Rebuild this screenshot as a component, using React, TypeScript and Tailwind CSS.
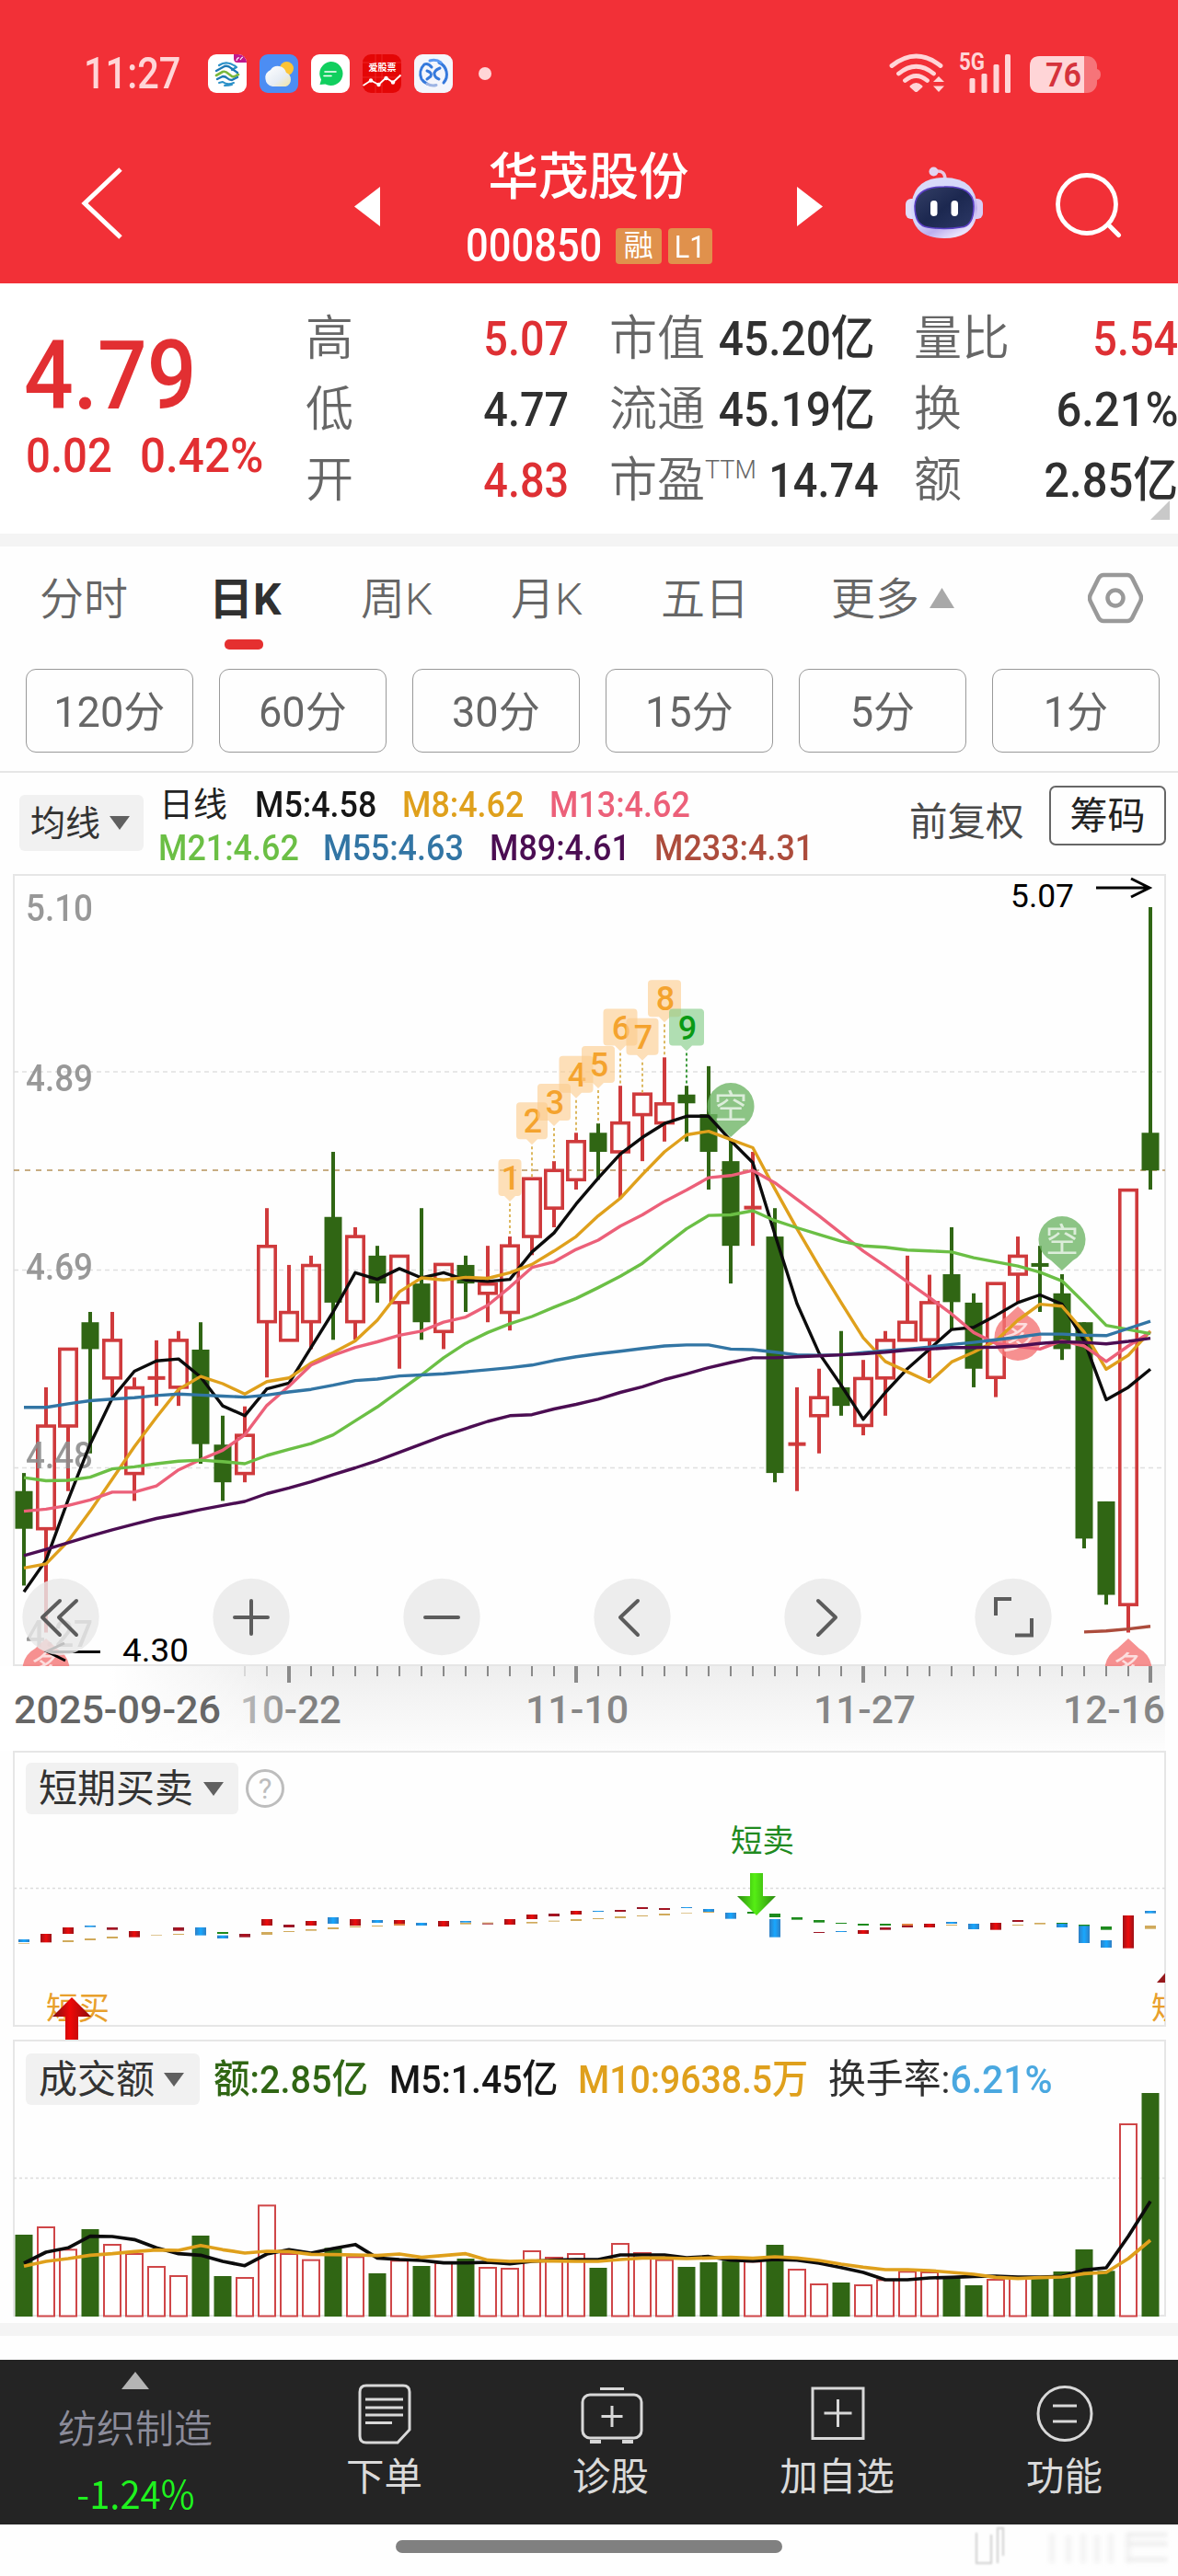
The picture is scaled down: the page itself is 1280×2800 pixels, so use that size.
import React from 'react';

const FONT = "font-[Roboto,'Noto_Sans_CJK_SC',sans-serif]";

type Kind = 'r' | 'g';
type Candle = [Kind, number, number, number, number];

// kind, high, body top, body bottom, low (chart units)
const candles: Candle[] = [
  ['g', 1178, 1213, 1286, 1396], ['r', 1012, 1086, 1287, 1487], ['r', 937, 937, 1088, 1213], ['g', 866, 886, 938, 1140],
  ['r', 866, 920, 995, 1030], ['r', 993, 1012, 1180, 1232], ['r', 921, 994, 994, 1048], ['r', 903, 920, 1013, 1048],
  ['g', 886, 939, 1122, 1160], ['g', 1067, 1123, 1196, 1232], ['r', 1049, 1104, 1180, 1196], ['r', 665, 738, 886, 993],
  ['r', 775, 866, 922, 922], ['r', 757, 775, 886, 938], ['g', 556, 682, 848, 920], ['r', 702, 719, 886, 920],
  ['g', 738, 757, 811, 848], ['r', 757, 757, 849, 976], ['g', 665, 811, 886, 920], ['r', 773, 773, 905, 938],
  ['g', 757, 775, 811, 866], ['r', 738, 811, 831, 886], ['r', 720, 737, 868, 902], ['r', 607, 607, 721, 756],
  ['r', 574, 591, 666, 702], ['r', 519, 535, 611, 629], ['g', 501, 519, 556, 610], ['r', 428, 499, 557, 647],
  ['r', 443, 443, 485, 574], ['r', 373, 462, 501, 536], ['g', 428, 445, 462, 536], ['g', 390, 483, 556, 629],
  ['g', 530, 574, 738, 811], ['r', 556, 664, 664, 738], ['g', 665, 720, 1178, 1196], ['r', 1012, 1122, 1122, 1213],
  ['r', 976, 1031, 1068, 1140], ['g', 903, 1012, 1048, 1067], ['r', 959, 994, 1087, 1105], ['r', 903, 920, 995, 1067],
  ['r', 757, 885, 922, 922], ['r', 794, 847, 921, 994], ['g', 702, 793, 847, 900], ['g', 830, 848, 976, 1012],
  ['r', 810, 810, 994, 1031], ['r', 720, 757, 794, 848], ['g', 738, 775, 775, 866], ['g', 793, 830, 938, 959],
  ['g', 886, 886, 1305, 1324], ['g', 1233, 1233, 1414, 1433], ['r', 629, 629, 1434, 1487], ['g', 82, 519, 592, 629],
];

const ma21 = [1187,1193,1192,1186,1170,1166,1160,1155,1153,1156,1160,1144,1132,1121,1104,1077,1050,1019,988,955,927,906,889,875,857,840,819,797,772,738,705,679,678,670,689,703,716,729,738,741,746,748,750,761,769,777,789,806,848,892,900,908];
const ma55 = [1051,1051,1044,1038,1035,1032,1028,1025,1027,1029,1031,1027,1021,1016,1008,999,996,990,988,986,982,978,974,969,960,953,947,942,937,932,930,930,938,939,944,949,950,949,945,941,938,934,929,925,920,915,909,909,911,912,898,884];
const ma89 = [1338,1326,1313,1300,1288,1277,1266,1258,1249,1241,1233,1218,1207,1195,1181,1168,1154,1138,1122,1106,1092,1078,1067,1065,1054,1045,1035,1022,1011,997,986,974,964,955,955,953,951,949,947,944,940,938,935,935,934,932,927,924,925,928,923,917];
const ma13 = [1252,1248,1241,1230,1215,1215,1203,1172,1152,1134,1104,1047,1010,969,950,935,924,911,903,886,876,853,818,780,769,745,727,700,678,652,630,606,602,592,616,648,680,714,748,777,808,838,870,906,927,933,938,922,932,962,932,905];
const ma8 = [1362,1354,1310,1252,1190,1127,1070,1016,991,1005,1025,1001,994,965,945,922,882,827,800,804,799,801,790,774,748,720,680,646,600,556,523,516,532,548,628,705,778,848,916,962,982,1002,963,944,922,882,851,855,905,977,950,903];
const ma5 = [1408,1347,1230,1122,1033,981,961,957,992,1048,1067,1015,1004,935,866,790,803,782,800,790,804,807,803,750,713,657,607,560,528,501,487,487,534,577,716,850,946,1008,1074,1022,976,938,900,896,873,848,833,851,922,1036,1012,977];

const volumes: [Kind, number][] = [
  ['g',657],['r',633],['r',706],['g',639],['r',690],['r',720],['r',762],['r',792],['g',660],['g',792],['r',798],['r',562],['r',720],['r',740],['g',700],['r',730],['g',783],['r',742],['g',759],['r',750],['g',735],['r',765],['r',768],['r',711],['r',732],['r',720],['g',765],['r',687],['r',717],['r',740],['g',762],['g',747],['g',742],['r',745],['g',690],['r',771],['r',819],['g',813],['r',822],['r',805],['r',778],['r',780],['g',792],['g',822],['r',804],['r',800],['g',792],['g',777],['g',705],['g',775],['r',297],['g',195],
];
const vol5 = [750,714,700,662,663,673,700,719,724,744,758,720,706,717,702,689,733,738,741,749,749,747,752,744,740,738,738,723,723,723,732,728,740,743,738,740,750,764,780,804,804,798,796,793,792,795,795,793,772,765,662,548];
const vol10 = [760,744,735,724,719,712,707,708,692,706,717,711,712,721,722,723,725,720,731,725,719,740,744,742,743,744,744,738,733,733,735,733,731,734,729,733,741,753,763,771,771,774,780,786,796,800,797,795,784,780,735,675];

// index, colour, top, bottom
const signals: [number, string, number, number][] = [
  [0,'b',924,933],[0,'t',936,938],[1,'R',906,934],[2,'R',885,906],[2,'t',927,933],[3,'b',879,884],[3,'t',921,927],[4,'D',885,893],[4,'t',915,921],[5,'R',897,917],[6,'t',909,911],[7,'D',885,896],[7,'t',906,909],[8,'b',885,911],[9,'G',900,906],[9,'b',911,921],[10,'D',906,917],[11,'R',858,879],[11,'t',900,909],[12,'D',876,885],[12,'t',897,900],[13,'R',864,879],[13,'t',891,896],[14,'b',852,873],[14,'t',885,891],[15,'R',858,879],[15,'t',881,885],[16,'b',861,870],[16,'t',879,882],[17,'R',861,873],[17,'o',873,879],[18,'b',870,879],[19,'R',864,882],[20,'b',864,869],[20,'t',870,875],[21,'t',869,872],[21,'D',872,875],[22,'R',858,876],[23,'R',843,858],[23,'t',867,872],[24,'D',840,849],[24,'t',863,866],[25,'R',831,843],[25,'t',858,864],[26,'b',831,834],[26,'t',855,858],[27,'D',828,834],[27,'t',849,855],[28,'D',819,825],[28,'t',846,849],[29,'D',822,828],[29,'t',840,846],[30,'b',819,822],[30,'t',837,839],[31,'b',825,834],[31,'t',834,837],[32,'b',837,857],[33,'G',834,840],[34,'G',840,852],[34,'b',858,917],[35,'G',852,860],[36,'G',861,869],[36,'D',900,903],[37,'G',870,873],[37,'b',897,900],[38,'G',873,879],[38,'R',894,906],[39,'G',873,879],[39,'D',885,893],[40,'o',873,879],[40,'D',879,885],[41,'R',873,885],[42,'b',867,873],[42,'t',876,879],[43,'b',873,891],[44,'R',870,893],[45,'D',861,867],[45,'t',876,879],[46,'t',870,875],[47,'b',871,885],[47,'G',870,873],[48,'b',878,936],[48,'G',876,880],[49,'G',882,893],[49,'b',927,951],[50,'R',846,953],[51,'b',831,839],[51,'t',879,890],
];
const signalFill: Record<string, string> = { b: 'url(#sb)', t: '#d0aa5c', R: 'url(#sr)', D: 'url(#sd)', G: '#1d8a1d', o: '#e08040' };

const X = (i: number) => 26 + 24 * i;
const Y = (v: number) => 940 + v * 0.5612;
const V = (v: number) => 2210 + v / 3;
const path = (vals: number[], f: (v: number) => number, start = 0) =>
  vals.map((v, i) => `${X(i + start)},${f(v).toFixed(1)}`).join(' ');

const RED = '#cf3a3c';
const GREEN = '#306614';

function CandleShape({ c, i }: { c: Candle; i: number }) {
  const [k, h, t, b, l] = c;
  const x = X(i);
  const yt = Y(t);
  const yb = Y(b);
  const col = k === 'r' ? RED : GREEN;
  if (t === b) {
    return (
      <g fill={col}>
        <rect x={x - 2} y={Y(h)} width={4} height={Y(l) - Y(h)} />
        <rect x={x - 9.5} y={yt - 2} width={19} height={4} />
      </g>
    );
  }
  if (k === 'g') {
    return (
      <g fill={col}>
        <rect x={x - 2} y={Y(h)} width={4} height={Y(l) - Y(h)} />
        <rect x={x - 9.5} y={yt} width={19} height={yb - yt} />
      </g>
    );
  }
  return (
    <g>
      {t > h && <rect x={x - 2} y={Y(h)} width={4} height={yt - Y(h)} fill={col} />}
      {l > b && <rect x={x - 2} y={yb} width={4} height={Y(l) - yb} fill={col} />}
      <rect x={x - 9.2} y={yt + 0.6} width={18.4} height={yb - yt - 1.2} fill="none" stroke={col} strokeWidth={3.6} />
    </g>
  );
}

function CountFlag({ n, i, top, w = 36 }: { n: number; i: number; top: number; w?: number }) {
  const x = X(i);
  const y = Y(top);
  const green = n === 9;
  return (
    <g>
      <line x1={x} x2={x} y1={y + 48} y2={Y(candles[i][1])} stroke={green ? '#3c9a3c' : '#dcb860'} strokeWidth={2} strokeDasharray="3 3" />
      <path
        d={`M${x - w / 2 + 4} ${y}h${w - 8}q4 0 4 4v32q0 4 -4 4h-${w / 2 - 10}l-6 6l-6 -6h-${w / 2 - 10}q-4 0 -4 -4v-32q0 -4 4 -4z`}
        fill={green ? '#7fca83' : '#fccb8c'}
        opacity={0.62}
      />
      <text x={x + 1} y={y + 33} textAnchor="middle" fontSize={36} fontWeight={500} fill={green ? '#0a9a14' : '#f4a32e'}>{n}</text>
    </g>
  );
}

function Bubble({ x, cy, kind }: { x: number; cy: number; kind: 'short' | 'long' }) {
  const short = kind === 'short';
  const d = short
    ? `M${x - 12} ${cy + 22}A25.500 25.500 0 1 1 ${x + 12} ${cy + 22}L${x} ${cy + 33}z`
    : `M${x - 12} ${cy - 22}A25.500 25.500 0 1 0 ${x + 12} ${cy - 22}L${x} ${cy - 33}z`;
  return (
    <g>
      <path d={d} fill={short ? '#6fb567' : '#f47474'} opacity={0.8} />
      <text x={x} y={cy + 13} textAnchor="middle" fontSize={36} fill="#fff" opacity={0.7}>{short ? '空' : '多'}</text>
    </g>
  );
}

function KChart() {
  const cx = [66, 273, 480, 687, 894, 1101];
  return (
    <svg className="block" width={1280} height={968} viewBox="0 942 1280 968">
      <defs>
        <linearGradient id="axis" x1="0" y1="0" x2="0" y2="1">
          <stop offset="0" stopColor="#eeeeee" />
          <stop offset="1" stopColor="#fdfdfd" />
        </linearGradient>
        <linearGradient id="fade" x1="0" y1="0" x2="1" y2="0">
          <stop offset="0" stopColor="#fff" />
          <stop offset="0.4" stopColor="#fff" />
          <stop offset="1" stopColor="#fff" stopOpacity="0" />
        </linearGradient>
        <linearGradient id="dateFade" gradientUnits="userSpaceOnUse" x1="262" y1="0" x2="330" y2="0">
          <stop offset="0" stopColor="#bdbdbd" />
          <stop offset="1" stopColor="#808080" />
        </linearGradient>
        <clipPath id="plot"><rect x="0" y="950" width="1267" height="861" /></clipPath>
      </defs>
      <rect x="15" y="951" width="1251" height="859" fill="none" stroke="#e6e6e6" strokeWidth="2" />
      {[1165, 1380.5, 1595.5].map((y) => (
        <line key={y} x1="15" x2="1266" y1={y} y2={y} stroke="#e0e0e0" strokeWidth="1.3" strokeDasharray="5 4" />
      ))}
      <line x1="15" x2="1266" y1="1272" y2="1272" stroke="#b5935a" strokeWidth="1.6" strokeDasharray="6 6" />
      <g clipPath="url(#plot)">
        <g>{candles.map((c, i) => <CandleShape key={i} c={c} i={i} />)}</g>
        <g fontSize={40} fontWeight={500} fill="#8e8e8e" opacity={0.9}>
          <text x="28" y="1001" textLength="73" lengthAdjust="spacingAndGlyphs">5.10</text>
          <text x="28" y="1186" textLength="73" lengthAdjust="spacingAndGlyphs">4.89</text>
          <text x="28" y="1391" textLength="73" lengthAdjust="spacingAndGlyphs">4.69</text>
          <text x="28" y="1596" textLength="73" lengthAdjust="spacingAndGlyphs">4.48</text>
          <text x="28" y="1790" textLength="73" lengthAdjust="spacingAndGlyphs">4.27</text>
        </g>
        <Bubble x={1106} cy={1453} kind="long" />
        <Bubble x={794} cy={1203} kind="short" />
        <Bubble x={1154} cy={1348} kind="short" />
        <Bubble x={50} cy={1814} kind="long" />
        <Bubble x={1226} cy={1814} kind="long" />
        <g fill="none" strokeWidth="3.400" strokeLinejoin="round">
          <polyline points={path(ma5, Y)} stroke="#0c0c0c" />
          <polyline points={path(ma8, Y)} stroke="#dfa01c" />
          <polyline points={path(ma13, Y)} stroke="#ec6079" />
          <polyline points={path(ma21, Y)} stroke="#6bbf45" />
          <polyline points={path(ma55, Y)} stroke="#3275a4" />
          <polyline points={path(ma89, Y)} stroke="#4b0d52" />
          <polyline points={path([1486, 1484, 1480, 1475], Y, 48)} stroke="#ac4c3c" />
        </g>
      </g>
      <CountFlag n={1} i={22} top={570} w={25} />
      <CountFlag n={2} i={23} top={460} w={34} />
      <CountFlag n={3} i={24} top={424} />
      <CountFlag n={4} i={25} top={370} w={37} />
      <CountFlag n={5} i={26} top={351} />
      <CountFlag n={6} i={27} top={279} w={37} />
      <CountFlag n={7} i={28} top={297} w={35} />
      <CountFlag n={8} i={29} top={223} />
      <CountFlag n={9} i={30} top={279} w={38} />
      <g fontSize={35} fill="#000">
        <text x="1098" y="986" textLength="69" lengthAdjust="spacingAndGlyphs">5.07</text>
        <text x="133" y="1806" textLength="72" lengthAdjust="spacingAndGlyphs">4.30</text>
      </g>
      <g fill="none" stroke="#000" strokeWidth="3">
        <path d="M1191 965H1249M1229 955L1249 965L1229 975" />
        <path d="M109 1795.500H51M70 1786L51 1795L71 1805" />
      </g>
      {cx.map((x) => <circle key={x} cx={x} cy={1757.5} r={41.7} fill="#e9e9e9" opacity={0.82} />)}
      <g fill="none" stroke="#5c5c5c" strokeWidth="4" strokeLinecap="round" strokeLinejoin="round">
        <path d="M65 1740L46 1758L65 1777M83 1740L64 1758L83 1777" />
        <path d="M255 1758H291M273 1740V1776" />
        <path d="M462 1758H498" />
        <path d="M693 1740L674 1758L693 1777" />
        <path d="M889 1740L908 1758L889 1777" />
        <path strokeLinecap="butt" strokeLinejoin="miter" d="M1099 1738H1082V1756M1103 1777.500H1121V1759" />
      </g>
      <rect x="15" y="1811" width="1251" height="92" fill="url(#axis)" />
      <rect x="0" y="1811" width="300" height="92" fill="url(#fade)" />
      <g>
        {candles.map((_, i) => {
          if (i < 10) return null;
          const major = [12, 25, 38, 51].includes(i);
          return (
            <rect key={i} x={X(i) - (major ? 2 : 1)} y={1811} width={major ? 4 : 2} height={major ? 18 : 11}
              fill={i === 10 ? '#d8d8d8' : i === 11 ? '#b0b0b0' : '#8a8a8a'} />
          );
        })}
      </g>
      <g fontSize={42} fontWeight={500} fill="#868686">
        <text x="15" y="1873" fill="#666" textLength="225" lengthAdjust="spacingAndGlyphs">2025-09-26</text>
        <text x="261" y="1873" fill="url(#dateFade)" textLength="110" lengthAdjust="spacingAndGlyphs">10-22</text>
        <text x="571" y="1873" textLength="112" lengthAdjust="spacingAndGlyphs">11-10</text>
        <text x="884" y="1873" textLength="111" lengthAdjust="spacingAndGlyphs">11-27</text>
        <text x="1155" y="1873" textLength="111" lengthAdjust="spacingAndGlyphs">12-16</text>
      </g>
    </svg>
  );
}

function SignalChart() {
  return (
    <svg className="block" width={1280} height={314} viewBox="0 1903 1280 314">
      <defs>
        <clipPath id="sig"><rect x="15" y="1903" width="1251" height="314" /></clipPath>
        <linearGradient id="up" x1="0" y1="0" x2="1" y2="0">
          <stop offset="0" stopColor="#7c1010" /><stop offset="0.45" stopColor="#f00808" /><stop offset="1" stopColor="#8c0c0c" />
        </linearGradient>
        <linearGradient id="down" x1="0" y1="0" x2="1" y2="0">
          <stop offset="0" stopColor="#2c8a10" /><stop offset="0.45" stopColor="#55ee14" /><stop offset="1" stopColor="#2c8a10" />
        </linearGradient>
        <linearGradient id="sb" x1="0" y1="0" x2="1" y2="0">
          <stop offset="0" stopColor="#2f7fc4" /><stop offset="0.5" stopColor="#18a8ff" /><stop offset="1" stopColor="#2f7fc4" />
        </linearGradient>
        <linearGradient id="sr" x1="0" y1="0" x2="1" y2="0">
          <stop offset="0" stopColor="#9c1218" /><stop offset="0.5" stopColor="#ee0c0c" /><stop offset="1" stopColor="#9c1218" />
        </linearGradient>
        <linearGradient id="sd" x1="0" y1="0" x2="1" y2="0">
          <stop offset="0" stopColor="#8a2030" /><stop offset="0.5" stopColor="#b00e1c" /><stop offset="1" stopColor="#8a2030" />
        </linearGradient>
      </defs>
      <rect x="15" y="1904" width="1251" height="298" fill="none" stroke="#e6e6e6" strokeWidth="2" />
      <line x1="15" x2="1266" y1="2052.500" y2="2052.500" stroke="#dcdcdc" strokeWidth="1.5" strokeDasharray="3 3" />
      {signals.map(([i, c, t, b], n) => (
        <rect key={n} x={X(i) - 6} y={1800 + t / 3} width={12} height={(b - t) / 3} fill={signalFill[c]} />
      ))}
      <text x="794" y="2013" fontSize="34.500" fill="#1f8a1f">短卖</text>
      <text x="50" y="2195" fontSize="34.500" fill="#e8a02c">短买</text>
      <path d="M815 2036H829V2061H843L822 2082L801 2061H815z" fill="url(#down)" />
      <path d="M78 2171L99 2192H85V2217H71V2192H57z" fill="url(#up)" />
      <g clipPath="url(#sig)">
        <text x="1251" y="2195" fontSize="34.500" fill="#e8a02c">短</text>
        <path d="M1257 2155L1272 2138V2155z" fill="#96181c" />
      </g>
    </svg>
  );
}

function VolumeChart() {
  return (
    <svg className="block" width={1280} height={308} viewBox="0 2217 1280 308">
      <rect x="15" y="2218" width="1251" height="299" fill="none" stroke="#e6e6e6" strokeWidth="2" />
      <line x1="15" x2="1266" y1="2367.500" y2="2367.500" stroke="#dcdcdc" strokeWidth="1.5" strokeDasharray="3 3" />
      {volumes.map(([k, t], i) =>
        k === 'g' ? (
          <rect key={i} x={X(i) - 9.5} y={V(t)} width={19} height={2518 - V(t)} fill={GREEN} />
        ) : (
          <rect key={i} x={X(i) - 9} y={V(t)} width={18} height={2517.5 - V(t)} fill="#fff" stroke="#cf4648" strokeWidth={2} />
        ),
      )}
      <g fill="none" strokeWidth="3.700" strokeLinejoin="round">
        <polyline points={path(vol5, V)} stroke="#0c0c0c" />
        <polyline points={path(vol10, V)} stroke="#dfa01c" />
      </g>
    </svg>
  );
}

function AppIcons() {
  return (
    <svg className="ml-[225px] block shrink-0" width="320" height="44" viewBox="224 58 320 44">
      <defs>
        <linearGradient id="cloud" x1="0" y1="0" x2="1" y2="1">
          <stop offset="0" stopColor="#ffffff" /><stop offset="0.6" stopColor="#e6ecf4" /><stop offset="1" stopColor="#f4e4a0" />
        </linearGradient>
        <clipPath id="badge"><rect x="225" y="59" width="42" height="42" rx="9" /></clipPath>
      </defs>
      <g clipPath="url(#badge)">
        <rect x="225" y="59" width="42" height="42" fill="#fff" />
        <path d="M253 59h14v9h-10q-4 0-4-4z" fill="#c2188c" />
        <path d="M256 66q1-4 3-3M260 65q2-3 3-3" fill="none" stroke="#fff" strokeWidth="1.200" />
        <g fill="none" strokeLinecap="round" strokeLinejoin="round">
          <path d="M237 71q9-6 19 2l-5 3" stroke="#2a90c8" strokeWidth="2.200" />
          <path d="M234 77l9-5q4-1 7 2l7 5" stroke="#1d78b4" strokeWidth="2.400" />
          <path d="M234 82l7-4q3-1 6 2l4 3q2 1 5-1l2-1" stroke="#79b83c" strokeWidth="2.600" />
          <path d="M235 86l6-3q3 0 5 2t5 2l6-3" stroke="#1d78b4" strokeWidth="2.400" />
          <path d="M237 90l4-1q5 4 12 1M243 93q5 0 8-1" stroke="#2a90c8" strokeWidth="2" />
        </g>
      </g>
      <g>
        <rect x="281" y="59" width="42" height="42" rx="9" fill="#4c8df3" />
        <circle cx="310.500" cy="74.500" r="7.500" fill="#fdc435" />
        <path d="M295 94a9.500 9.500 0 0 1-2-18a9.500 9.500 0 0 1 17 3a8 8 0 0 1-.5 15z" fill="url(#cloud)" />
      </g>
      <g>
        <rect x="337" y="59" width="42" height="42" rx="9" fill="#fff" />
        <path d="M358 67a13 13 0 1 1-5.500 24.500l-6 .5l1.500-5.500a13 13 0 0 1 10-19.500z" fill="#10cf5e" />
        <path d="M352 78h12M351 82.500h8" stroke="#fff" strokeWidth="1.600" strokeLinecap="round" />
      </g>
      <g>
        <rect x="393" y="59" width="42" height="42" rx="9" fill="#e40606" />
        <path d="M393 84h42M407 59v42M414 59v42M393 68h42" stroke="#f23a3a" strokeWidth="0.600" />
        <text x="414.500" y="76.500" textAnchor="middle" fontSize="10" fontWeight="700" fill="#fff">爱股票</text>
        <path d="M393.500 93l8.500-5.500 8.500 4.500 8-7.500 7.500 5 8.500-8" fill="none" stroke="#fff" strokeWidth="1.800" />
        <g fill="#fff"><circle cx="402" cy="87.500" r="2.200" /><circle cx="410.500" cy="92" r="2.200" /><circle cx="418.500" cy="85" r="2.200" /><circle cx="426" cy="89.500" r="2.200" /></g>
      </g>
      <g fill="none" strokeWidth="3" strokeLinecap="round">
        <rect x="449" y="59" width="42" height="42" rx="9" fill="#f4f6fc" stroke="none" />
        <path d="M457 86a14.500 14.500 0 0 1 3-16q4-2 8 3M463 91q-4-2-5-4M476 68a14 14 0 0 1 5 22" stroke="#3579dc" />
        <path d="M466 66q7-2 12 2" stroke="#5a9af4" />
        <path d="M463 77q6 2 4 6l-4 3M477 74q-7 3-6 7q1 4 5 5" stroke="#3579dc" />
        <path d="M463 91q5 3 10 1.500" stroke="#9db4e4" />
      </g>
      <circle cx="526" cy="80" r="7" fill="#ffd5d7" />
    </svg>
  );
}

function StatusRight() {
  return (
    <svg className="ml-auto mr-[80px] block" width="236" height="48" viewBox="964 56 236 48">
      <g fill="none" stroke="#ffd5d7" strokeWidth="4.800" strokeLinecap="round">
        <path d="M969 71.500Q995.500 50.500 1022 71.500M976.500 80Q995.500 64.500 1014.500 80M983.500 87.500Q995.500 77.500 1007.500 87.500" />
      </g>
      <path d="M989 93q6.500-6 13 0q1 1 0 2l-5 4.500q-1.500 1-3 0l-5-4.500q-1-1 0-2zM1014 89l6-6 6 6zM1014 93.500l6 6.500 6-6.500z" fill="#ffd5d7" />
      <text x="1042" y="76" fontSize="25" fontWeight="700" fill="#ffd5d7" textLength="28" lengthAdjust="spacingAndGlyphs">5G</text>
      <g fill="#ffd5d7">
        <rect x="1053.500" y="85" width="6" height="16" rx="1.500" /><rect x="1066.500" y="80" width="6" height="21" rx="1.500" />
        <rect x="1079.500" y="70" width="6" height="31" rx="1.500" /><rect x="1092" y="59" width="6" height="42" rx="1.500" />
      </g>
      <rect x="1119" y="61" width="73" height="40" rx="11" fill="#f67479" />
      <path d="M1130 61h48v40h-48q-11 0-11-11v-18q0-11 11-11z" fill="#ffd5d7" />
      <path d="M1192 75q4 1 4 6t-4 6z" fill="#f67479" />
      <text x="1136" y="94" fontSize="36" fontWeight="600" fill="#d5333c" textLength="39" lengthAdjust="spacingAndGlyphs">76</text>
    </svg>
  );
}

function Robot() {
  return (
    <svg className="block" width="88" height="82" viewBox="980 180 88 82">
      <defs>
        <linearGradient id="shell" x1="0" y1="0" x2="0.6" y2="1">
          <stop offset="0" stopColor="#dcdcfa" /><stop offset="0.6" stopColor="#d2d6fa" /><stop offset="0.8" stopColor="#bcaeee" /><stop offset="1" stopColor="#e8e2fc" />
        </linearGradient>
        <linearGradient id="visor" x1="0" y1="0" x2="1" y2="1">
          <stop offset="0" stopColor="#343f66" /><stop offset="0.5" stopColor="#1c2850" /><stop offset="1" stopColor="#2c3866" />
        </linearGradient>
      </defs>
      <path d="M1026 195q0-10-10-9" fill="none" stroke="#e8c8e2" strokeWidth="3.500" />
      <circle cx="1013.500" cy="186.500" r="5" fill="#e2d4f2" />
      <rect x="983" y="216" width="14" height="22" rx="6" fill="#e0dcf8" />
      <rect x="1053" y="216" width="14" height="22" rx="6" fill="#d8ccf4" />
      <path d="M1025 193q35 0 36 34q-1 32-36 32t-36-32q1-34 36-34z" fill="url(#shell)" />
      <path d="M1025 203q32-1 32 21t-14 23q-18 3-36 0q-14-2-14-23q1-21 32-21z" fill="url(#visor)" stroke="#5a3fc4" strokeWidth="1.600" />
      <rect x="1010" y="218" width="7.500" height="17" rx="3.700" fill="#fff" /><rect x="1032.500" y="218" width="7.500" height="17" rx="3.700" fill="#fff" />
    </svg>
  );
}

function Header() {
  return (
    <header className="h-[308px] bg-[#f23037]">
      <div className="flex h-[110px] items-center pt-[50px]">
        <div className="-mr-[225px] w-[225px] shrink-0 pl-[91px] text-[48px] font-medium leading-[60px] text-[#ffd5d7]">
          <span className="inline-block origin-left scale-x-[0.865] whitespace-nowrap">11:27</span>
        </div>
        <AppIcons />
        <StatusRight />
      </div>
      <div className="flex h-[198px]">
        <div className="w-[385px] pl-[88px] pt-[71px]">
          <svg width="48" height="80" viewBox="88 181 48 80"><path d="M131 184L92 221L131 258" fill="none" stroke="#fff" strokeWidth="5" /></svg>
        </div>
        <svg className="mt-[93px] block" width="28" height="43"><path d="M0 21.500L28 0V43z" fill="#fff" /></svg>
        <div className="flex w-[453px] flex-col items-center pt-[47px] text-white">
          <div className="text-[54.500px] font-medium leading-[70px]">华茂股份</div>
          <div className="mt-[10px] flex w-[268px] items-center leading-[60px]">
            <div className="w-[163px] text-[50px] font-medium"><span className="inline-block origin-left scale-x-[0.87]">000850</span></div>
            <span className="h-[39px] w-[51px] rounded-[4px] bg-[#e0914c] text-center text-[32px] leading-[38px]">融</span>
            <span className="ml-[7px] h-[39px] w-[48px] rounded-[4px] bg-[#e0914c] text-center text-[34px] leading-[40px]"><span className="inline-block scale-x-[0.9]">L1</span></span>
          </div>
        </div>
        <svg className="mt-[93px] block" width="28" height="43"><path d="M28 21.500L0 0V43z" fill="#fff" /></svg>
        <div className="ml-[87px] pt-[70px]"><Robot /></div>
        <svg className="ml-[76px] mt-[74px] block" width="76" height="80" viewBox="1144 184 76 80">
          <circle cx="1180" cy="222" r="31.500" fill="none" stroke="#fff" strokeWidth="4.800" /><path d="M1203.500 244.500l11 11" stroke="#fff" strokeWidth="5" strokeLinecap="round" />
        </svg>
      </div>
    </header>
  );
}

const squeezes = { normal: 'scale-x-[0.9]', mid: 'scale-x-[0.92]', wide: 'scale-x-[0.94]' };

function Quote({ label, value, red, fit = 'normal', sup }: { label: string; value: string; red?: boolean; fit?: keyof typeof squeezes; sup?: string }) {
  const tone = red ? 'text-[#de3034]' : 'text-[#303030]';
  return (
    <div className="flex h-[77px] items-center justify-between leading-[77px]">
      <span className="flex whitespace-nowrap text-[52px] font-[350] text-[#666]">
        {label}
        {sup && <sup className="top-0 -mt-[11px] text-[27px] leading-[77px]">{sup}</sup>}
      </span>
      <span className={`origin-right whitespace-nowrap text-[52px] font-medium ${squeezes[fit]} ${tone}`}>{value}</span>
    </div>
  );
}

function QuotePanel() {
  return (
    <section className="relative flex h-[272px] bg-white pt-[22px]">
      <div className="w-[332px] pl-[26px] text-[#e22f32]">
        <div className="mt-[29px] h-[100px] text-[104px] font-medium leading-[100px]"><span className="inline-block origin-left scale-x-[0.91]">4.79</span></div>
        <div className="mt-[7px] flex pl-[2px] text-[52px] font-medium leading-[60px]">
          <span className="w-[124px]"><span className="inline-block origin-left scale-x-[0.91]">0.02</span></span>
          <span className="inline-block origin-left scale-x-[0.95]">0.42%</span>
        </div>
      </div>
      <div className="w-[286px]">
        <Quote label="高" value="5.07" red />
        <Quote label="低" value="4.77" />
        <Quote label="开" value="4.83" red />
      </div>
      <div className="ml-[44px] w-[287px]">
        <Quote label="市值" value="45.20亿" fit="mid" />
        <Quote label="流通" value="45.19亿" fit="mid" />
        <Quote label="市盈" sup="TTM" value="14.74" />
      </div>
      <div className="ml-[44px] w-[287px]">
        <Quote label="量比" value="5.54" red />
        <Quote label="换" value="6.21%" fit="wide" />
        <Quote label="额" value="2.85亿" fit="wide" />
      </div>
      <svg className="absolute bottom-[15px] right-[9px]" width="21" height="21"><path d="M21 0V21H0z" fill="#c9c9c9" /></svg>
    </section>
  );
}

function Tabs() {
  return (
    <nav className="flex h-[114px] pt-[24px] text-[48px] font-[350] leading-[68px] text-[#666]">
      <div className="w-[187px] pl-[43px]">分时</div>
      <div className="w-[162px] pl-[40px] font-bold text-[#303030]">
        日K
        <div className="ml-[17px] mt-[9px] h-[11px] w-[42px] rounded-[5px] bg-[#e53030]" />
      </div>
      <div className="w-[163px] pl-[43px]">周K</div>
      <div className="w-[163px] pl-[43px]">月K</div>
      <div className="w-[189px] pl-[43px]">五日</div>
      <div className="flex w-[318px] pl-[39px]">
        更多
        <svg className="ml-[11px] mt-[21px]" width="27" height="22"><path d="M13.500 0L27 22H0z" fill="#a8a8a8" /></svg>
      </div>
      <svg className="mt-[2px]" width="60" height="60" viewBox="1180 620 60 60">
        <path d="M1197 625H1223Q1226 625 1228 628L1237 646Q1239 650 1237 654L1228 672Q1226 675 1223 675H1197Q1194 675 1192 672L1183 654Q1181 650 1183 646L1192 628Q1194 625 1197 625z" fill="none" stroke="#999" strokeWidth="4.500" />
        <circle cx="1210" cy="650" r="8.500" fill="none" stroke="#999" strokeWidth="4.500" />
      </svg>
    </nav>
  );
}

const Caret = () => <svg className="block shrink-0" width="22" height="15"><path d="M0 0H22L11 15z" fill="#606060" /></svg>;

function Legend() {
  return (
    <section className="flex h-[101px] text-[39px] font-medium">
      <div className="ml-[21px] mt-[24px] flex h-[61px] w-[135px] items-center rounded-[6px] bg-[#f1f1f1] pl-[12px] text-[38px] font-normal text-[#333]">
        <span className="mr-[10px] whitespace-nowrap leading-[62px]">均线</span><Caret />
      </div>
      <div className="ml-[16px] w-[816px] pt-[12px]">
        <div className="flex leading-[47px]">
          <span className="w-[105px] pl-[1px] text-[37px] font-normal text-[#222]">日线</span>
          <span className="w-[160px] text-[#161616]"><span className="inline-block origin-left scale-x-[0.92]">M5:4.58</span></span>
          <span className="w-[160px] text-[#dfa01c]"><span className="inline-block origin-left scale-x-[0.92]">M8:4.62</span></span>
          <span className="text-[#ec6079]"><span className="inline-block origin-left scale-x-[0.92]">M13:4.62</span></span>
        </div>
        <div className="flex leading-[47px]">
          <span className="w-[179px] text-[#6bbf45]"><span className="inline-block origin-left scale-x-[0.92]">M21:4.62</span></span>
          <span className="w-[181px] text-[#3275a4]"><span className="inline-block origin-left scale-x-[0.92]">M55:4.63</span></span>
          <span className="w-[179px] text-[#4b0d52]"><span className="inline-block origin-left scale-x-[0.92]">M89:4.61</span></span>
          <span className="text-[#ac4c3c]"><span className="inline-block origin-left scale-x-[0.92]">M233:4.31</span></span>
        </div>
      </div>
      <div className="w-[152px] whitespace-nowrap pt-[24px] text-[41.500px] font-normal leading-[60px] text-[#4a4a4a]">前复权</div>
      <div className="mt-[14px] h-[65px] w-[127px] rounded-[7px] border-2 border-[#666] text-center text-[41px] font-normal leading-[63px] text-[#222]">筹码</div>
    </section>
  );
}

function BottomNav() {
  return (
    <footer className="flex h-[179px] bg-[#242424] text-[41.500px] text-[#dadada]">
      <div className="flex w-[294px] flex-col items-center pt-[13px]">
        <svg width="30" height="19"><path d="M15 0L30 19H0z" fill="#b4b4b4" /></svg>
        <div className="mt-[16px] text-[42px] font-[350] leading-[56px] text-[#8c8c9a]">纺织制造</div>
        <div className="mt-[15px] font-['Noto_Sans_CJK_SC'] text-[42px] leading-[50px] text-[#1ff21f]"><span className="inline-block scale-x-[0.95]">-1.24%</span></div>
      </div>
      <div className="flex w-[247px] flex-col items-center pt-[22px]">
        <svg width="66" height="72" viewBox="385 2587 66 72" fill="none" stroke="#d8d8d8" strokeWidth="3">
          <path d="M398 2593H438Q445 2593 445 2600V2641L432 2655H398Q391 2655 391 2648V2600Q391 2593 398 2593z" />
          <path d="M397 2608H438M397 2617H438M397 2625H438M397 2633.500H426" />
        </svg>
        <div className="mt-[8px] leading-[52px]">下单</div>
      </div>
      <div className="flex w-[245px] flex-col items-center pt-[22px]">
        <svg width="72" height="72" viewBox="627 2587 72 72" fill="none" stroke="#d8d8d8" strokeWidth="3">
          <rect x="632" y="2603" width="64" height="47" rx="8" /><path d="M651 2596.500H677M664 2615V2638M652.500 2626.500H675.500" /><path d="M640 2654H652M675 2654H687" strokeWidth="4" />
        </svg>
        <div className="mt-[8px] leading-[52px]">诊股</div>
      </div>
      <div className="flex w-[247px] flex-col items-center pt-[22px]">
        <svg width="66" height="72" viewBox="876 2587 66 72" fill="none" stroke="#d8d8d8" strokeWidth="3">
          <rect x="882" y="2596" width="55" height="54.500" /><path d="M909.500 2608V2638M894.500 2623H924.500" />
        </svg>
        <div className="mt-[8px] leading-[52px]">加自选</div>
      </div>
      <div className="flex w-[247px] flex-col items-center pt-[22px]">
        <svg width="66" height="72" viewBox="1123 2587 66 72" fill="none" stroke="#d8d8d8" strokeWidth="3">
          <circle cx="1156" cy="2623.500" r="29" /><path d="M1143 2615H1169M1143 2632H1169" />
        </svg>
        <div className="mt-[8px] leading-[52px]">功能</div>
      </div>
    </footer>
  );
}

export default function App() {
  return (
    <main className={`${FONT} h-[2800px] w-[1280px] overflow-hidden bg-[#fefefe]`}>
      <Header />
      <QuotePanel />
      <div className="h-[14px] bg-[#f4f4f4]" />
      <Tabs />
      <div className="mt-[19px] grid grid-cols-6 gap-[28px] pl-[28px] pr-[20px]">
        {['120分', '60分', '30分', '15分', '5分', '1分'].map((t) => (
          <div key={t} className="h-[91px] rounded-[11px] border-[1.5px] border-[#999] text-center text-[46px] leading-[92px] text-[#666]">
            <span className="inline-block scale-x-[0.98]">{t}</span>
          </div>
        ))}
      </div>
      <div className="mt-[20px] h-[2px] bg-[#e6e6e6]" />
      <Legend />
      <div className="h-px" />
      <KChart />
      <section className="relative -mt-[7px] h-[314px]">
        <SignalChart />
        <div className="absolute left-[28px] top-[13px] flex items-center">
          <div className="flex h-[56px] w-[231px] items-center rounded-[6px] bg-[#f1f1f1] pl-[14px] text-[42px] leading-[60px] text-[#333]">
            <span className="mr-[11px] pt-[2px]">短期买卖</span><Caret />
          </div>
          <div className="ml-[8px] h-[42px] w-[42px] rounded-full border-[3px] border-[#bdbdbd] text-center text-[31px] leading-[37px] text-[#bdbdbd]">?</div>
        </div>
      </section>
      <section className="relative h-[308px]">
        <VolumeChart />
        <div className="absolute left-[28px] top-[14px] flex items-center whitespace-nowrap text-[43px] leading-[58px]">
          <div className="flex h-[56px] w-[189px] items-center rounded-[6px] bg-[#f1f1f1] pl-[14px] text-[42px] text-[#333]">
            <span className="mr-[10px] pt-[1px]">成交额</span><Caret />
          </div>
          <span className="w-[206px] pl-[15px] font-medium text-[#306614]"><span className="inline-block origin-left scale-x-[0.92]">额:2.85亿</span></span>
          <span className="w-[205px] font-medium text-[#161616]"><span className="inline-block origin-left scale-x-[0.91]">M5:1.45亿</span></span>
          <span className="w-[272px] font-medium text-[#dfa01c]"><span className="inline-block origin-left scale-x-[0.91]">M10:9638.5万</span></span>
          <span className="text-[#303030]"><span className="inline-block origin-left scale-x-[0.95]">换手率:<span className="font-medium text-[#4aa8e0]">6.21%</span></span></span>
        </div>
      </section>
      <div className="h-[14px] bg-[#f4f4f4]" />
      <div className="h-[26px] bg-[#fefefe]" />
      <BottomNav />
      <div className="flex h-[56px] items-start">
        <div className="ml-[430px] mt-[17px] h-[14px] w-[420px] shrink-0 rounded-full bg-[#808080]" />
        <svg className="ml-[206px] block shrink-0" width="224" height="56" viewBox="1056 2744 224 56">
          <g fill="none" strokeWidth="2">
            <path className="blur-[1px]" d="M1061 2753V2786H1077V2755M1084 2786V2748H1090V2778" stroke="#cfcfcf" />
            <g className="blur-[2px]">
              <path d="M1143 2754V2786M1161 2756V2786M1177 2754V2786M1192 2756V2786M1207 2754V2786M1226 2754V2786" stroke="#f3f3f3" strokeWidth="6" />
              <path d="M1224 2755H1268M1224 2765H1268M1224 2782H1268" stroke="#eeeeee" strokeWidth="5" />
            </g>
          </g>
        </svg>
      </div>
    </main>
  );
}
